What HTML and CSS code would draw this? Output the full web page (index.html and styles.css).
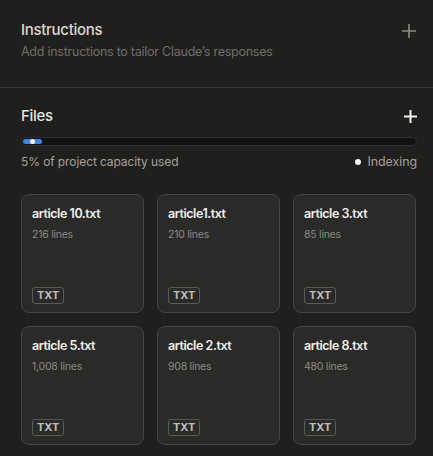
FILE: index.html
```html
<!DOCTYPE html>
<html>
<head>
<meta charset="utf-8">
<link rel="stylesheet" href="styles.css">
</head>
<body>
<section class="instructions">
  <div class="head">
    <h2 class="title">Instructions</h2>
    <svg class="plus plus-thin" width="14" height="14" viewBox="0 0 14 14"><path d="M7 0V14M0 7H14" stroke="#8c8b87" stroke-width="1.6" fill="none"/></svg>
  </div>
  <p class="sub">Add instructions to tailor Claude’s responses</p>
</section>
<section class="files">
  <div class="head">
    <h2 class="title">Files</h2>
    <svg class="plus plus-bold" width="13" height="13" viewBox="0 0 13 13"><path d="M6.5 0V13M0 6.5H13" stroke="#f2f1ee" stroke-width="2" fill="none"/></svg>
  </div>
  <div class="bar"><div class="fill"><span class="knob"></span></div></div>
  <div class="meta">
    <span>5% of project capacity used</span>
    <span class="status"><span class="dot"></span>Indexing</span>
  </div>
  <div class="grid">
    <div class="card"><div class="name">article 10.txt</div><div class="lines">216 lines</div><span class="badge">TXT</span></div>
    <div class="card"><div class="name">article1.txt</div><div class="lines">210 lines</div><span class="badge">TXT</span></div>
    <div class="card"><div class="name">article 3.txt</div><div class="lines">85 lines</div><span class="badge">TXT</span></div>
    <div class="card"><div class="name">article 5.txt</div><div class="lines">1,008 lines</div><span class="badge">TXT</span></div>
    <div class="card"><div class="name">article 2.txt</div><div class="lines">908 lines</div><span class="badge">TXT</span></div>
    <div class="card"><div class="name">article 8.txt</div><div class="lines">480 lines</div><span class="badge">TXT</span></div>
  </div>
</section>
</body>
</html>
```
FILE: styles.css
```css
* { box-sizing: border-box; }
html, body { margin: 0; padding: 0; }
body {
  width: 433px;
  height: 456px;
  overflow: hidden;
  background: #1f1f1e;
  font-family: Inter, "Noto Sans", sans-serif;
  color: #e8e7e3;
}
.instructions {
  padding: 20px 17px 0 21px;
  height: 88px;
  border-bottom: 1px solid #393937;
}
.head {
  display: flex;
  align-items: center;
  justify-content: space-between;
}
.title {
  margin: 0;
  font-size: 15px;
  font-weight: 500;
  line-height: 20px;
  color: #d9d8d4;
  letter-spacing: -0.3px;
}
.files .title { color: #e6e5e1; }
.plus-thin { margin-top: 2px; }
.sub {
  margin: 3px 0 0;
  font-size: 12.5px;
  line-height: 18px;
  color: #6f6e6a;
  letter-spacing: -0.25px;
}
.files {
  padding: 18px 16px 0 21px;
}
.bar {
  margin-top: 11px;
  width: 396px;
  height: 9px;
  border-radius: 5px;
  background: #131313;
  border: 1px solid #2e2e2d;
  padding: 1px;
}
.fill {
  width: 19px;
  height: 5px;
  border-radius: 3px;
  background: #3a86f0;
  position: relative;
}
.knob {
  position: absolute;
  left: 7px;
  top: 0;
  width: 5px;
  height: 5px;
  border-radius: 50%;
  background: #f3f3f3;
}
.meta {
  margin-top: 7px;
  display: flex;
  justify-content: space-between;
  align-items: center;
  font-size: 12px;
  line-height: 18px;
  color: #a2a19d;
  width: 396px;
  letter-spacing: -0.1px;
}
.status { display: flex; align-items: center; gap: 6px; font-size: 12.5px; }
.dot {
  width: 6px; height: 6px; border-radius: 50%; background: #f4f4f2;
}
.grid {
  margin-top: 23px;
  display: grid;
  grid-template-columns: repeat(3, 123px);
  grid-auto-rows: 119px;
  gap: 13px;
}
.card {
  background: #2a2a29;
  border: 1px solid #454543;
  border-radius: 8px;
  padding: 10px 10px 8px 10px;
  display: flex;
  flex-direction: column;
  align-items: flex-start;
}
.name {
  font-size: 12.5px;
  font-weight: 600;
  line-height: 18px;
  color: #f0efeb;
  letter-spacing: -0.45px;
}
.lines {
  margin-top: 5px;
  font-size: 10.5px;
  line-height: 14px;
  color: #8a8985;
  letter-spacing: -0.25px;
}
.badge {
  margin-top: auto;
  height: 17px;
  padding: 0 4px;
  border: 1px solid #5a5a57;
  border-radius: 3px;
  font-size: 11px;
  font-weight: 700;
  line-height: 15px;
  color: #bfbeba;
}
```
